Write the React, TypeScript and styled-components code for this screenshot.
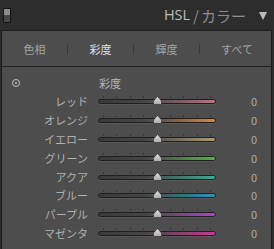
import * as React from 'react';
import styled, { createGlobalStyle } from 'styled-components';

const GlobalStyle = createGlobalStyle`
  html, body {
    margin: 0;
    padding: 0;
    background: #2d2d2d;
    width: 274px;
    height: 249px;
    overflow: hidden;
  }
  body {
    font-family: "Noto Sans CJK JP", "Noto Sans", sans-serif;
  }
`;

const Frame = styled.div`
  width: 274px;
  height: 249px;
  display: flex;
  flex-direction: column;
`;

const Header = styled.div`
  height: 30px;
  display: flex;
  align-items: center;
  padding: 0 7px 0 3px;
  box-sizing: border-box;
`;

const SoloSwitch = styled.div`
  width: 6px;
  height: 13px;
  border: 1px solid #141414;
  background: linear-gradient(#8c8c8c 0 50%, #474747 50% 100%);
  margin-top: 1px;
`;

const Title = styled.div`
  margin-left: auto;
  display: flex;
  align-items: center;
  font-size: 15px;
  line-height: 1;
  color: #8e8e8e;
`;

const Active = styled.span`
  color: #bdbdbd;
  font-family: "Open Sans", "Noto Sans CJK JP", sans-serif;
  font-size: 14.5px;
`;

const Slash = styled.span`
  margin: 0 2px 0 3px;
`;

const Caret = styled.span`
  width: 0;
  height: 0;
  margin-left: 13px;
  margin-top: 2px;
  border-left: 4.5px solid transparent;
  border-right: 4.5px solid transparent;
  border-top: 8px solid #bcbcbc;
`;

const Panel = styled.div`
  flex: 1;
  margin: 0 2px 0 1px;
  border: 1px solid #1c1c1c;
  border-bottom: none;
  background: #4d4d4d;
  display: flex;
  flex-direction: column;
`;

const Tabs = styled.div`
  height: 35px;
  display: flex;
  align-items: center;
  border-bottom: 1px solid #222;
`;

const Tab = styled.div<{ $active?: boolean; $last?: boolean }>`
  ${(p) => (p.$last ? 'flex: 1;' : 'width: 65px;')}
  text-align: center;
  font-size: 11px;
  color: ${(p) => (p.$active ? '#e2e2e2' : '#a3a3a3')};
  padding-left: ${(p) => (p.$last ? '3px' : '0')};
`;

const Divider = styled.div`
  width: 1px;
  height: 10px;
  background: #3a3a3a;
`;

const Body = styled.div`
  padding-top: 6px;
  display: flex;
  flex-direction: column;
`;

const Grid = styled.div`
  display: grid;
  grid-template-columns: 86px 118px 31px;
  column-gap: 10px;
  align-items: center;
`;

const TitleRow = styled(Grid)`
  height: 19px;
`;

const Target = styled.div`
  width: 6px;
  height: 6px;
  border: 1px solid #bdbdbd;
  border-radius: 50%;
  margin-left: 10px;
  display: flex;
  align-items: center;
  justify-content: center;
  &::after {
    content: '';
    width: 2px;
    height: 2px;
    border-radius: 50%;
    background: #bdbdbd;
  }
`;

const SectionName = styled.div`
  font-size: 11px;
  color: #b9b9b9;
  padding-left: 1px;
`;

const Row = styled(Grid)`
  height: 18.8px;
`;

const Label = styled.div`
  font-size: 11px;
  color: #b0b0b0;
  text-align: right;
  white-space: nowrap;
`;

const Value = styled.div`
  font-size: 11px;
  color: #acacac;
  text-align: right;
`;

const SliderBox = styled.div`
  position: relative;
  height: 18px;
  box-sizing: border-box;
  padding-top: 4px;
  display: flex;
  flex-direction: column;
`;

const Ticks = styled.div`
  display: flex;
  justify-content: space-between;
  padding: 0 5px;
  height: 2px;
  margin-bottom: 1px;
`;

const Tick = styled.div`
  width: 1px;
  height: 2px;
  background: #353535;
`;

const Track = styled.div<{ $color: string }>`
  height: 3px;
  border: 1px solid #1f1f1f;
  border-radius: 3px;
  background: linear-gradient(to right, #3a3a3a 0%, #464646 40%, ${(p) => p.$color} 100%);
  box-shadow: 0 1px 0 rgba(255, 255, 255, 0.06);
`;

const Thumb = styled.svg`
  position: absolute;
  left: 55px;
  top: 4px;
`;

const channels = [
  { name: 'レッド', color: '#c2707f' },
  { name: 'オレンジ', color: '#c98a55' },
  { name: 'イエロー', color: '#b39a6a' },
  { name: 'グリーン', color: '#56b048' },
  { name: 'アクア', color: '#36ad98' },
  { name: 'ブルー', color: '#2797b8' },
  { name: 'パープル', color: '#a849bd' },
  { name: 'マゼンタ', color: '#cc3796' },
];

const Slider = ({ color }: { color: string }) => (
  <SliderBox>
    <Ticks>
      {Array.from({ length: 9 }).map((_, i) => (
        <Tick key={i} />
      ))}
    </Ticks>
    <Track $color={color} />
    <Thumb width="9" height="9" viewBox="0 0 9 9">
      <defs>
        <linearGradient id="thumbGrad" x1="0" y1="0" x2="0" y2="1">
          <stop offset="0" stopColor="#e4e4e4" />
          <stop offset="1" stopColor="#a8a8a8" />
        </linearGradient>
      </defs>
      <path d="M4.5 0.5 L8.5 5 L8.5 8.5 L0.5 8.5 L0.5 5 Z" fill="url(#thumbGrad)" stroke="#2a2a2a" strokeWidth="0.6" />
    </Thumb>
  </SliderBox>
);

export default function App() {
  return (
    <Frame>
      <GlobalStyle />
      <Header>
        <SoloSwitch />
        <Title>
          <Active>HSL</Active>
          <Slash>/</Slash>
          カラー
          <Caret />
        </Title>
      </Header>
      <Panel>
        <Tabs>
          <Tab>色相</Tab>
          <Divider />
          <Tab $active>彩度</Tab>
          <Divider />
          <Tab>輝度</Tab>
          <Divider />
          <Tab $last>すべて</Tab>
        </Tabs>
        <Body>
          <TitleRow>
            <Target />
            <SectionName>彩度</SectionName>
          </TitleRow>
          {channels.map((c) => (
            <Row key={c.name}>
              <Label>{c.name}</Label>
              <Slider color={c.color} />
              <Value>0</Value>
            </Row>
          ))}
        </Body>
      </Panel>
    </Frame>
  );
}
